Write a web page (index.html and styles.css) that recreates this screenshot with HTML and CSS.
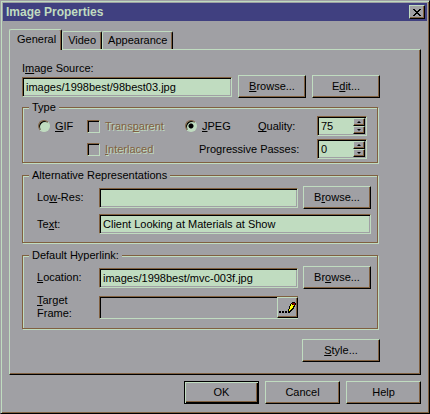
FILE: index.html
```html
<!DOCTYPE html>
<html lang="en">
    <head>
        <meta charset="utf-8">
        <title>Image Properties</title>
        <link rel="stylesheet" href="styles.css">
    </head>
    <body>
        <form class="dialog">
            <header class="titlebar">
                <h1>Image Properties</h1>
                <button type="button" class="close" aria-label="Close">
                    <svg width="8" height="7" viewBox="0 0 8 7" shape-rendering="crispEdges">
                        <path d="M0 0h2v1h1v1h2v-1h1v-1h2v1h-1v1h-1v1h-1v1h1v1h1v1h1v1h-2v-1h-1v-1h-2v1h-1v1h-2v-1h1v-1h1v-1h1v-1h-1v-1h-1v-1h-1z"/>
                    </svg>
                </button>
            </header>
            <nav class="tabs" role="tablist">
                <button type="button" class="tab active" role="tab" aria-selected="true">General</button>
                <button type="button" class="tab" role="tab" aria-selected="false">Video</button>
                <button type="button" class="tab" role="tab" aria-selected="false">Appearance</button>
            </nav>
            <main class="panel">
                <section class="source">
                    <label for="source">I<u>m</u>age Source:</label>
                    <input type="text" id="source" class="field" value="images/1998best/98best03.jpg">
                    <button type="button" class="button"><span><u>B</u>rowse...</span></button>
                    <button type="button" class="button"><span>E<u>d</u>it...</span></button>
                </section>

                <fieldset class="group">
                    <legend>Type</legend>
                    <div class="type">
                        <label class="choice"><input type="radio" name="type"><span><u>G</u>IF</span></label>
                        <label class="choice disabled"><input type="checkbox" disabled><span>Trans<u>p</u>arent</span></label>
                        <label class="choice"><input type="radio" name="type" checked><span><u>J</u>PEG</span></label>
                        <label class="quality" for="quality"><u>Q</u>uality:</label>
                        <div class="spinner">
                            <input type="number" id="quality" value="75">
                            <button type="button" class="up" aria-label="Increase quality"></button>
                            <button type="button" class="down" aria-label="Decrease quality"></button>
                        </div>
                        <label class="choice disabled interlaced"><input type="checkbox" disabled><span><u>I</u>nterlaced</span></label>
                        <label class="passes" for="passes">Progressive Passes:</label>
                        <div class="spinner">
                            <input type="number" id="passes" value="0">
                            <button type="button" class="up" aria-label="Increase passes"></button>
                            <button type="button" class="down" aria-label="Decrease passes"></button>
                        </div>
                    </div>
                </fieldset>

                <fieldset class="group">
                    <legend>Alternative Representations</legend>
                    <div class="rows">
                        <label for="lowres">Lo<u>w</u>-Res:</label>
                        <input type="text" id="lowres" class="field">
                        <button type="button" class="button"><span>B<u>r</u>owse...</span></button>
                        <label for="text">Te<u>x</u>t:</label>
                        <input type="text" id="text" class="field wide" value="Client Looking at Materials at Show">
                    </div>
                </fieldset>

                <fieldset class="group">
                    <legend>Default Hyperlink:</legend>
                    <div class="rows">
                        <label for="location"><u>L</u>ocation:</label>
                        <input type="text" id="location" class="field" value="images/1998best/mvc-003f.jpg">
                        <button type="button" class="button"><span>Br<u>o</u>wse...</span></button>
                        <label for="target"><u>T</u>arget<br>Frame:</label>
                        <div class="target">
                            <input type="text" id="target" readonly>
                            <button type="button" class="pencil" aria-label="Choose target frame">
                                <svg width="17" height="11" viewBox="0 0 17 11" shape-rendering="crispEdges">
                                    <path d="M0 9h2v2h-2zM3 9h2v2h-2zM6 9h2v2h-2z"/>
                                    <path d="M13 0h3v1h1v2h-1v2h-1v2h-1v1h-1v1h-1v1h-1v1h-2v-4h1v-3h1v-2h1v-1h1z"/>
                                    <path fill="#ff0" d="M12 2h1v1h2v1h-1v2h-1v1h-1v1h-1v1h-1v-2h1v-3h1z"/>
                                    <path fill="#800000" d="M13 1h3v2h-2v-1h-1z"/>
                                </svg>
                            </button>
                        </div>
                    </div>
                </fieldset>

                <button type="button" class="button style"><span><u>S</u>tyle...</span></button>
            </main>
            <footer class="actions">
                <button type="submit" class="button default">OK</button>
                <button type="button" class="button">Cancel</button>
                <button type="button" class="button">Help</button>
            </footer>
        </form>
    </body>
</html>
```
FILE: styles.css
```css
:root {
    --face: #a0a0a4;
    --light: #c0dcc0;
    --shadow: #806040;
    --title: #404080;
}

* {
    box-sizing: border-box;
}

body {
    margin: 0;
    background: var(--face);
    color: #000;
    font: 11px/13px "Liberation Sans", Arial, sans-serif;
}

button, input {
    margin: 0;
    padding: 0;
    border: 0;
    border-radius: 0;
    outline: 0;
    color: inherit;
    font: inherit;
    background: var(--face);
}

u {
    text-underline-offset: 1px;
    text-decoration-skip-ink: none;
}

.dialog {
    display: flex;
    flex-direction: column;
    min-height: 100vh;
    padding: 1px;
    border: 1px solid;
    border-color: var(--face) #000 #000 var(--face);
    box-shadow: inset 1px 1px var(--light), inset -1px -1px var(--shadow);
}

.titlebar {
    display: flex;
    align-items: center;
    justify-content: space-between;
    height: 18px;
    margin: 1px 1px 8px;
    padding: 0 2px 0 3px;
    background: var(--title);
    color: var(--light);
}

    .titlebar h1 {
        margin: 0;
        font-size: 12px;
    }

.button, .close, .pencil {
    border: 1px solid;
    border-color: var(--light) #000 #000 var(--light);
    box-shadow: inset -1px -1px var(--shadow);
}

.close {
    display: grid;
    place-content: center;
    width: 16px;
    height: 14px;
    color: #000;
}

    .close svg, .pencil svg {
        display: block;
    }

.tabs {
    display: flex;
    align-items: flex-end;
    height: 20px;
    padding-left: 7px;
}

.tab {
    height: 18px;
    padding: 0 5px;
    border: 1px solid;
    border-color: var(--light) #000 transparent var(--light);
    border-bottom: 0;
    border-radius: 2px 2px 0 0;
    box-shadow: inset -1px 0 var(--shadow);
}

    .tab.active {
        position: relative;
        height: 21px;
        margin-bottom: -1px;
        padding: 0 5px 2px 7px;
    }

.panel {
    flex: 1;
    display: flex;
    flex-direction: column;
    margin: 0 7px;
    padding: 12px 40px 11px 12px;
    border: 1px solid;
    border-color: var(--light) #000 #000 var(--light);
    box-shadow: inset -1px -1px var(--shadow);
}

.button {
    width: 68px;
    height: 23px;
}

.source {
    display: grid;
    grid-template-columns: 1fr 68px 68px;
    column-gap: 6px;
    align-items: center;
    margin-bottom: 3px;
}

    .source label {
        grid-column: 1 / -1;
    }

.field, .spinner, .target {
    height: 20px;
    border: 1px solid;
    border-color: var(--shadow) var(--light) var(--light) var(--shadow);
    box-shadow: inset 1px 1px #000, inset -1px -1px var(--face);
    background: var(--light);
}

.field {
    width: 100%;
    min-width: 0;
    padding: 1px 3px;
}

.group {
    min-width: 0;
    margin: 0 2px 6px 0;
    padding: 0;
    border: 1px solid var(--shadow);
    box-shadow: 1px 1px var(--light), inset 1px 1px var(--light);
}

    .group legend {
        margin-left: 6px;
        padding: 0 3px;
        background: var(--face);
    }

.type {
    display: grid;
    grid-template-columns: 49px 98px 62px 1fr 50px;
    row-gap: 3px;
    align-items: center;
    padding: 2px 10px 3px 15px;
}

.choice {
    display: flex;
    align-items: center;
    gap: 5px;
}

    .choice.disabled {
        color: var(--shadow);
        text-shadow: 1px 1px var(--light);
    }

.interlaced {
    grid-column: 2;
}

.quality {
    padding-left: 11px;
}

.passes {
    grid-column: 3 / 5;
    padding-left: 14px;
}

input[type=radio], input[type=checkbox] {
    appearance: none;
    flex: none;
    width: 12px;
    height: 12px;
    border: 1px solid;
    border-color: var(--shadow) var(--light) var(--light) var(--shadow);
    box-shadow: inset 1px 1px #000;
}

input[type=checkbox] {
    width: 13px;
    height: 13px;
}

input[type=radio] {
    border-radius: 50%;
    background: var(--light);
}

    input[type=radio]:checked {
        background: radial-gradient(circle, #000 2px, var(--light) 3px);
    }

.spinner {
    display: grid;
    grid-template: 1fr 1fr / 1fr 12px;
    padding: 1px;
}

    .spinner input {
        grid-row: 1 / 3;
        width: 100%;
        min-width: 0;
        padding-left: 2px;
        background: none;
        appearance: textfield;
    }

    .spinner input::-webkit-inner-spin-button {
        display: none;
    }

    .spinner button {
        display: grid;
        place-content: center;
        border: 1px solid;
        border-color: var(--light) #000 #000 var(--light);
        box-shadow: inset -1px -1px var(--shadow);
    }

    .spinner button::before {
        content: "";
        width: 4px;
        height: 2px;
        background: #000;
        clip-path: polygon(50% 0, 100% 100%, 0 100%);
    }

    .spinner .down::before {
        clip-path: polygon(0 0, 100% 0, 50% 100%);
    }

.rows {
    display: grid;
    grid-template-columns: 57px 1fr 68px;
    gap: 5px;
    align-items: center;
    padding: 4px 6px 8px 14px;
}

    .rows .wide {
        grid-column: 2 / 4;
    }

.target {
    display: flex;
    height: 23px;
    border-right: 0;
    background: var(--face);
    box-shadow: inset 1px 1px #000;
}

    .target input {
        flex: 1;
        min-width: 0;
        background: none;
    }

.pencil {
    display: grid;
    place-content: center;
    width: 21px;
}

.style {
    align-self: flex-end;
    width: 78px;
    margin-top: 4px;
}

.actions {
    display: flex;
    justify-content: flex-end;
    gap: 6px;
    padding: 6px 7px 8px;
}

    .actions .button {
        width: 75px;
    }

    .actions .default {
        border-color: #000;
        box-shadow: inset 1px 1px var(--light), inset -1px -1px #000, inset -2px -2px var(--shadow);
    }
```
